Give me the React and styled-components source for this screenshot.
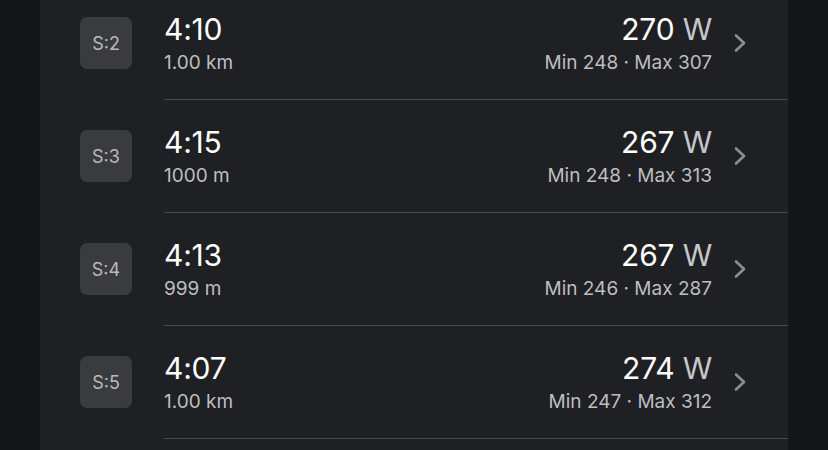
import React from 'react'
import styled, { createGlobalStyle } from 'styled-components'

const GlobalStyle = createGlobalStyle`
  html, body {
    margin: 0;
    padding: 0;
    background: #151618;
    overflow: hidden;
  }
  body {
    font-family: Inter, "Noto Sans", sans-serif;
    -webkit-font-smoothing: antialiased;
  }
`

const splits = [
  { id: 2, time: '4:10', dist: '1.00 km', avg: 270, min: 248, max: 307 },
  { id: 3, time: '4:15', dist: '1000 m', avg: 267, min: 248, max: 313 },
  { id: 4, time: '4:13', dist: '999 m', avg: 267, min: 246, max: 287 },
  { id: 5, time: '4:07', dist: '1.00 km', avg: 274, min: 247, max: 312 },
]

const Page = styled.div`
  width: 828px;
  height: 450px;
  display: flex;
  justify-content: center;
  overflow: hidden;
`

const Panel = styled.div`
  width: 748px;
  height: 463px;
  background: #1f2023;
  display: flex;
  flex-direction: column;
  margin-top: -13px;
`

const Row = styled.div`
  display: flex;
  align-items: stretch;
  padding-left: 40px;
  gap: 32px;
  height: 113px;
  flex-shrink: 0;
`

const BadgeCell = styled.div`
  display: flex;
  align-items: center;
  padding-bottom: 1px;
`

const Badge = styled.div`
  width: 52px;
  height: 52px;
  border-radius: 7px;
  background: #3a3b3f;
  color: #b9babd;
  font-size: 18px;
  display: flex;
  align-items: center;
  justify-content: center;
`

const Content = styled.div`
  flex: 1;
  display: flex;
  align-items: center;
  padding-right: 42px;
  border-bottom: 1px solid #48494d;
`

const Left = styled.div`
  flex: 1;
  display: flex;
  flex-direction: column;
  gap: 5px;
`

const Right = styled.div`
  display: flex;
  flex-direction: column;
  align-items: flex-end;
  gap: 5px;
`

const Main = styled.div`
  font-size: 30px;
  line-height: 34px;
  color: #ffffff;
  letter-spacing: -0.2px;
`

const Unit = styled.span`
  color: #c6c7ca;
`

const Sub = styled.div`
  font-size: 19px;
  line-height: 24px;
  color: #bdbec1;
`

const Chevron = styled.svg`
  margin-left: 22px;
  flex-shrink: 0;
`

const SplitRow = ({ split }) => (
  <Row>
    <BadgeCell>
      <Badge>S:{split.id}</Badge>
    </BadgeCell>
    <Content>
      <Left>
        <Main>{split.time}</Main>
        <Sub>{split.dist}</Sub>
      </Left>
      <Right>
        <Main>
          {split.avg} <Unit>W</Unit>
        </Main>
        <Sub>
          Min {split.min} · Max {split.max}
        </Sub>
      </Right>
      <Chevron width="12" height="20" viewBox="0 0 12 20">
        <polyline
          points="2,2.5 10,10 2,17.5"
          fill="none"
          stroke="#8d8e92"
          strokeWidth="2.6"
          strokeLinecap="round"
          strokeLinejoin="round"
        />
      </Chevron>
    </Content>
  </Row>
)

export default function App() {
  return (
    <Page>
      <GlobalStyle />
      <Panel>
        {splits.map((s) => (
          <SplitRow key={s.id} split={s} />
        ))}
      </Panel>
    </Page>
  )
}
